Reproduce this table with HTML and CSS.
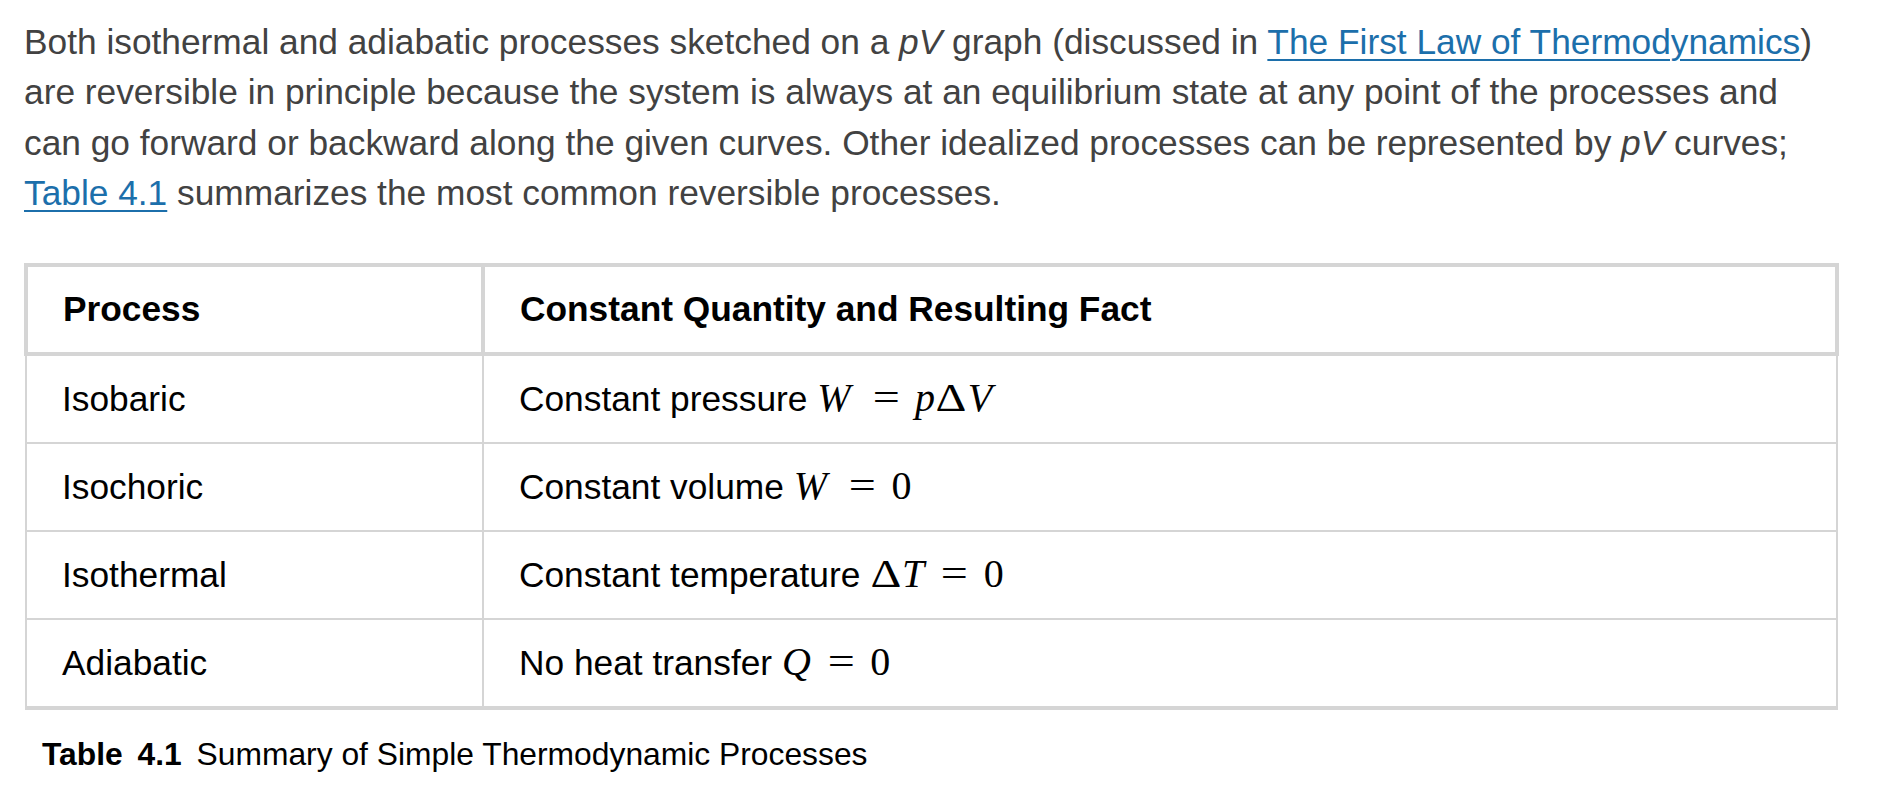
FILE: index.html
```html
<!DOCTYPE html>
<html>
<head>
<meta charset="utf-8">
<link rel="stylesheet" href="styles.css">
</head>
<body>
<div class="content">
  <p class="para">Both isothermal and adiabatic processes sketched on a <em>pV</em> graph (discussed in <a href="#">The First Law of Thermodynamics</a>) are reversible in principle because the system is always at an equilibrium state at any point of the processes and can go forward or backward along the given curves. Other idealized processes can be represented by <em>pV</em> curves; <a href="#">Table 4.1</a> summarizes the most common reversible processes.</p>
  <table class="summary">
    <thead>
      <tr><th class="col-process">Process</th><th>Constant Quantity and Resulting Fact</th></tr>
    </thead>
    <tbody>
      <tr><td>Isobaric</td><td>Constant pressure <span class="math"><i class="w">W</i><span class="op">=</span><i>p</i><span class="delta">Δ</span><i class="v">V</i></span></td></tr>
      <tr><td>Isochoric</td><td>Constant volume <span class="math"><i class="w">W</i><span class="op">=</span>0</span></td></tr>
      <tr><td>Isothermal</td><td>Constant temperature <span class="math"><span class="delta">Δ</span><i>T</i><span class="op">=</span>0</span></td></tr>
      <tr><td>Adiabatic</td><td>No heat transfer <span class="math"><i>Q</i><span class="op">=</span>0</span></td></tr>
    </tbody>
  </table>
  <div class="caption"><span class="cap-label">Table <span class="cap-num">4.1</span></span> Summary of Simple Thermodynamic Processes</div>
</div>
</body>
</html>
```

FILE: styles.css
```css
html, body {
  margin: 0;
  padding: 0;
  background: #ffffff;
}
body {
  font-family: "Liberation Sans", Arial, Helvetica, sans-serif;
}
.content {
  width: 1815px;
  margin-left: 24px;
  padding-top: 17px;
}
.para {
  margin: 0;
  font-size: 35.3px;
  line-height: 50.4px;
  color: #424242;
}
.para a {
  color: #1c6fab;
  text-decoration: underline;
  text-decoration-thickness: 2px;
  text-underline-offset: 5px;
}
.summary {
  margin-top: 44px;
  width: 100%;
  border-collapse: collapse;
  color: #000000;
  font-size: 35.3px;
  border-bottom: 4px solid #d5d5d5;
}
.summary th, .summary td {
  text-align: left;
  padding: 0 35px;
  height: 86px;
  line-height: 42px;
  vertical-align: middle;
}
.summary th {
  border: 4px solid #d5d5d5;
  font-weight: bold;
  height: 85px;
}
.summary td {
  border: 2px solid #d5d5d5;
}
.col-process {
  width: 383px;
}
.math {
  font-family: "Liberation Serif", "Times New Roman", serif;
  font-size: 40px;
}
.math .w {
  margin-right: 5px;
}
.math .delta {
  display: inline-block;
  transform: scaleX(1.2);
  margin: 0 3px;
}
.math .v {
  margin-left: 1px;
  margin-right: 4px;
}
.math .op {
  display: inline-block;
  margin: 0 18px 0 19px;
  transform: scaleX(1.2);
}
.caption {
  margin-top: 26px;
  padding-left: 18px;
  font-size: 31.8px;
  color: #000000;
}
.cap-label {
  font-weight: bold;
  margin-right: 6px;
}
.cap-num {
  margin-left: 6px;
}
```
